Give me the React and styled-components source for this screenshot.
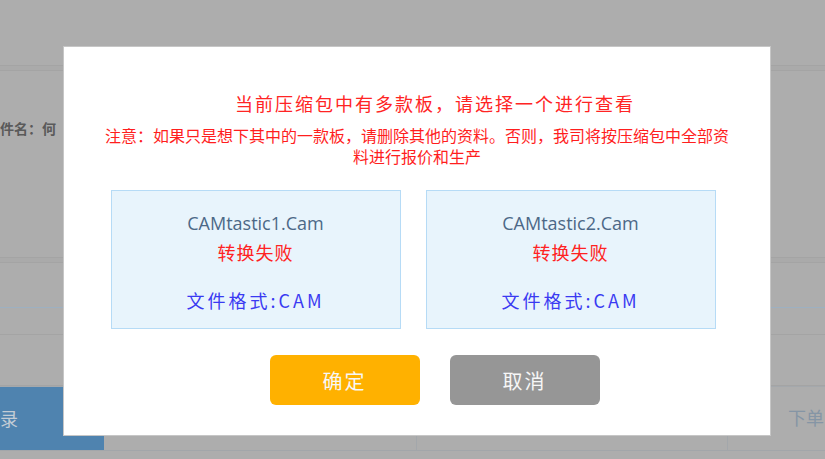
import styled, { createGlobalStyle } from 'styled-components';

const GlobalStyle = createGlobalStyle`
  html, body {
    margin: 0;
    padding: 0;
    background: #adadad;
    overflow: hidden;
  }
  * {
    box-sizing: border-box;
  }
`;

const Page = styled.div`
  position: relative;
  width: 825px;
  height: 459px;
  overflow: hidden;
  background: #adadad;
  font-family: 'Noto Sans CJK SC', 'Noto Sans', sans-serif;
`;

const TopBar = styled.div`
  height: 65px;
`;

const Band = styled.div`
  height: ${(p) => p.h || 6}px;
  border-top: 1px solid #a4a4a4;
  border-bottom: 1px solid ${(p) => p.tint || '#a4a4a4'};
  background: #aaaaaa;
`;

const InfoRow = styled.div`
  height: 186px;
  padding-top: 47px;
`;

const InfoText = styled.div`
  font-size: 14px;
  line-height: 20px;
  font-weight: 700;
  color: #5a5a5a;
  white-space: nowrap;
`;

const Row = styled.div`
  height: ${(p) => p.h}px;
  border-bottom: 1px solid ${(p) => p.line || '#a4a4a4'};
`;

const TabRow = styled.div`
  display: grid;
  grid-template-columns: 104px 312px 311px 1fr;
  height: 65px;
  border-top: 1px solid #a4a8ac;
  border-bottom: 1px solid #a2a6aa;
`;

const Tab = styled.div`
  background: #4f83af;
  color: #c3ccd5;
  font-size: 18px;
  line-height: 63px;
  white-space: nowrap;
`;

const Cell = styled.div`
  border-left: ${(p) => (p.first ? 'none' : '1px solid #a3a7ab')};
  color: #8595a5;
  font-size: 18px;
  line-height: 60px;
  padding-left: 60px;
  white-space: nowrap;
`;

const Modal = styled.div`
  position: absolute;
  top: 46px;
  left: 63px;
  width: 708px;
  height: 390px;
  background: #ffffff;
  border: 1px solid #c6c6c6;
  display: flex;
  flex-direction: column;
  align-items: center;
  padding-top: 42px;
`;

const Title = styled.div`
  font-size: 18px;
  letter-spacing: 2px;
  line-height: 28px;
  color: #ff2424;
  padding-left: 36px;
`;

const Note = styled.div`
  width: 630px;
  margin-top: 8px;
  font-size: 16px;
  line-height: 21px;
  text-align: center;
  color: #ff1e1e;
`;

const Cards = styled.div`
  display: flex;
  gap: 25px;
  margin-top: 23px;
  margin-right: 8px;
`;

const Card = styled.div`
  width: 290px;
  height: 139px;
  background: #e8f4fc;
  border: 1px solid #b6dbf6;
  display: flex;
  flex-direction: column;
  align-items: center;
  padding-top: 21px;
`;

const FileName = styled.div`
  font-family: 'Open Sans', 'Noto Sans CJK SC', sans-serif;
  font-size: 18px;
  line-height: 22px;
  color: #4c6887;
`;

const Status = styled.div`
  margin-top: 7px;
  font-size: 18px;
  line-height: 22px;
  letter-spacing: 1px;
  color: #ff2222;
`;

const Format = styled.div`
  margin-top: 26px;
  font-size: 18px;
  line-height: 22px;
  letter-spacing: 3px;
  color: #3a3af2;
`;

const Buttons = styled.div`
  display: flex;
  gap: 30px;
  margin-top: 26px;
  padding-left: 35px;
`;

const Button = styled.button`
  width: 150px;
  height: 50px;
  border: none;
  border-radius: 6px;
  background: ${(p) => (p.primary ? '#ffb100' : '#969696')};
  color: #f7f7f7;
  font-family: 'Noto Sans CJK SC', sans-serif;
  font-size: 20px;
  letter-spacing: 2px;
  cursor: pointer;
`;

const files = [
  { name: 'CAMtastic1.Cam', format: 'CAM' },
  { name: 'CAMtastic2.Cam', format: 'CAM' },
];

const App = () => {
  return (
    <Page>
      <GlobalStyle />
      <TopBar />
      <Band h={6} />
      <InfoRow>
        <InfoText>件名：何</InfoText>
      </InfoRow>
      <Band h={6} />
      <Row h={45} line="#9db0c1" />
      <Row h={27} />
      <Row h={51} />
      <TabRow>
        <Tab>录</Tab>
        <Cell first />
        <Cell />
        <Cell>下单</Cell>
      </TabRow>

      <Modal>
        <Title>当前压缩包中有多款板，请选择一个进行查看</Title>
        <Note>
          注意：如果只是想下其中的一款板，请删除其他的资料。否则，我司将按压缩包中全部资料进行报价和生产
        </Note>
        <Cards>
          {files.map((f) => (
            <Card key={f.name}>
              <FileName>{f.name}</FileName>
              <Status>转换失败</Status>
              <Format>文件格式:{f.format}</Format>
            </Card>
          ))}
        </Cards>
        <Buttons>
          <Button primary>确定</Button>
          <Button>取消</Button>
        </Buttons>
      </Modal>
    </Page>
  );
};

export default App;
